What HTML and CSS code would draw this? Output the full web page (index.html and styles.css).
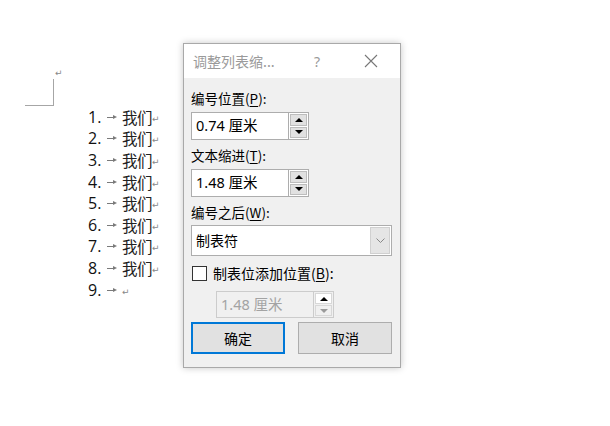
FILE: index.html
```html
<!DOCTYPE html>
<html lang="zh-CN">
<head>
  <meta charset="UTF-8" />
  <title>调整列表缩进</title>
  <link rel="stylesheet" href="styles.css">
</head>
<body>
  <div class="page">
    <div class="corner"><span class="mark">↵</span></div>
    <div class="list">
      <div class="item"><span class="num">1.</span><span class="tab"></span><span class="txt">我们</span><span class="ret">↵</span></div>
      <div class="item"><span class="num">2.</span><span class="tab"></span><span class="txt">我们</span><span class="ret">↵</span></div>
      <div class="item"><span class="num">3.</span><span class="tab"></span><span class="txt">我们</span><span class="ret">↵</span></div>
      <div class="item"><span class="num">4.</span><span class="tab"></span><span class="txt">我们</span><span class="ret">↵</span></div>
      <div class="item"><span class="num">5.</span><span class="tab"></span><span class="txt">我们</span><span class="ret">↵</span></div>
      <div class="item"><span class="num">6.</span><span class="tab"></span><span class="txt">我们</span><span class="ret">↵</span></div>
      <div class="item"><span class="num">7.</span><span class="tab"></span><span class="txt">我们</span><span class="ret">↵</span></div>
      <div class="item"><span class="num">8.</span><span class="tab"></span><span class="txt">我们</span><span class="ret">↵</span></div>
      <div class="item"><span class="num">9.</span><span class="tab"></span><span class="ret">↵</span></div>
    </div>
  </div>

  <div class="dialog">
    <div class="titlebar">
      <span class="title">调整列表缩...</span>
      <span class="help">?</span>
      <svg class="close" width="14" height="14" viewBox="0 0 14 14">
        <path d="M1 1L13 13M13 1L1 13" stroke="#777" stroke-width="1.1" fill="none"/>
      </svg>
    </div>
    <div class="body">
      <div class="label first">编号位置(<u>P</u>):</div>
      <div class="spin">
        <div class="spin-input">0.74 厘米</div>
        <div class="spin-btns">
          <div class="spin-btn"><span class="tri up"></span></div>
          <div class="spin-btn"><span class="tri down"></span></div>
        </div>
      </div>

      <div class="label">文本缩进(<u>T</u>):</div>
      <div class="spin">
        <div class="spin-input">1.48 厘米</div>
        <div class="spin-btns">
          <div class="spin-btn"><span class="tri up"></span></div>
          <div class="spin-btn"><span class="tri down"></span></div>
        </div>
      </div>

      <div class="label">编号之后(<u>W</u>):</div>
      <div class="select">
        <div class="select-value">制表符</div>
        <div class="select-btn">
          <svg width="9" height="6" viewBox="0 0 9 6"><path d="M0.5 0.5L4.5 4.5L8.5 0.5" stroke="#888" fill="none"/></svg>
        </div>
      </div>

      <div class="check-row">
        <span class="checkbox"></span>
        <span class="check-label">制表位添加位置(<u>B</u>):</span>
      </div>
      <div class="spin disabled">
        <div class="spin-input">1.48 厘米</div>
        <div class="spin-btns">
          <div class="spin-btn"><span class="tri up"></span></div>
          <div class="spin-btn"><span class="tri down"></span></div>
        </div>
      </div>

      <div class="buttons">
        <button class="btn default">确定</button>
        <button class="btn">取消</button>
      </div>
    </div>
  </div>
</body>
</html>
```

FILE: styles.css
```css
* {
  box-sizing: border-box;
}
body {
  margin: 0;
  width: 610px;
  height: 426px;
  background: #fff;
  position: relative;
  overflow: hidden;
  font-family: "Noto Sans", "Noto Sans CJK SC", sans-serif;
  color: #000;
}

/* document behind the dialog */
.page {
  padding-top: 79px;
}
.corner {
  position: relative;
  margin-left: 25px;
  width: 29px;
  height: 27px;
  border-right: 1px solid #a6a6a6;
  border-bottom: 1px solid #a6a6a6;
}
.corner .mark {
  position: absolute;
  left: 30px;
  top: -11px;
  font-size: 9px;
  color: #888;
  font-family: "DejaVu Sans", sans-serif;
}
.list {
  margin-left: 88px;
}
.item {
  display: flex;
  align-items: center;
  height: 21.6px;
}
.num {
  width: 16px;
  font-family: "Open Sans", sans-serif;
  font-size: 16px;
  color: #111;
}
/* tab mark: small gray arrow */
.tab {
  position: relative;
  width: 15px;
  height: 6px;
  margin-left: 3px;
  margin-top: 2px;
}
.tab::before {
  content: "";
  position: absolute;
  left: 0;
  top: 2px;
  width: 7px;
  height: 1px;
  background: #7a7a7a;
}
.tab::after {
  content: "";
  position: absolute;
  left: 6px;
  top: 0;
  border-left: 4px solid #7a7a7a;
  border-top: 2.5px solid transparent;
  border-bottom: 2.5px solid transparent;
}
.txt {
  font-family: "Noto Sans CJK SC", sans-serif;
  font-size: 15.5px;
  color: #222;
  letter-spacing: -0.5px;
}
.ret {
  font-size: 9px;
  color: #888;
  font-family: "DejaVu Sans", sans-serif;
  margin-top: 4px;
}

/* dialog window */
.dialog {
  position: absolute;
  left: 183px;
  top: 43px;
  width: 218px;
  height: 325px;
  background: #f0f0f0;
  border: 1px solid #a9a9a9;
  box-shadow: 0 0 7px rgba(0, 0, 0, 0.22);
  font-family: "Noto Sans CJK SC", sans-serif;
  font-size: 13.5px;
}
.titlebar {
  height: 34px;
  background: #fff;
  display: flex;
  align-items: center;
}
.title {
  padding-left: 9px;
  width: 130px;
  color: #9a9a9a;
  font-size: 14px;
}
.help {
  color: #999;
  font-size: 14px;
  font-family: "Noto Sans", sans-serif;
}
.close {
  margin-left: 44px;
}
.body {
  padding: 0 8px 0 7px;
}
.label {
  height: 20px;
  line-height: 20px;
  margin-top: 5px;
}
.label.first {
  margin-top: 10px;
}
.label u,
.check-label u {
  text-decoration-thickness: 1px;
  text-underline-offset: 2px;
}

.spin {
  display: flex;
  width: 118px;
  height: 28px;
  margin-top: 4px;
}
.spin-input {
  width: 97px;
  height: 100%;
  background: #fff;
  border: 1px solid #adadad;
  border-right: none;
  padding-left: 4px;
  line-height: 25px;
  font-family: "Noto Sans", "Noto Sans CJK SC", sans-serif;
  font-size: 14.5px;
}
.spin-btns {
  width: 21px;
  border: 1px solid #adadad;
  background: #fff;
  display: flex;
  flex-direction: column;
  padding: 1px;
  gap: 1px;
}
.spin-btn {
  flex: 1;
  background: #e1e1e1;
  border: 1px solid #bdbdbd;
  display: flex;
  align-items: center;
  justify-content: center;
}
.tri {
  width: 0;
  height: 0;
  border-left: 4px solid transparent;
  border-right: 4px solid transparent;
}
.tri.up {
  border-bottom: 4px solid #000;
}
.tri.down {
  border-top: 4px solid #000;
}
.spin.disabled {
  margin-left: 25px;
  margin-top: 8px;
  height: 27px;
}
.spin.disabled .spin-input {
  background: #f0f0f0;
  color: #a3a3a3;
  border-color: #cccccc;
  line-height: 24px;
}
.spin.disabled .spin-btns {
  border-color: #cccccc;
  background: #f0f0f0;
}
.spin.disabled .spin-btn {
  background: #f0f0f0;
  border-color: #d8d8d8;
}
.spin.disabled .spin-btn:first-child {
  background: #fff;
}
.spin.disabled .tri.down {
  border-top-color: #9a9a9a;
}

.select {
  display: flex;
  width: 201px;
  height: 31px;
  margin-top: 3px;
  background: #fff;
  border: 1px solid #adadad;
}
.select-value {
  flex: 1;
  padding-left: 4px;
  line-height: 28px;
  font-size: 14px;
}
.select-btn {
  width: 20px;
  margin: 1px;
  background: #e5e5e5;
  border: 1px solid #d0d0d0;
  display: flex;
  align-items: center;
  justify-content: center;
}

.check-row {
  display: flex;
  align-items: center;
  height: 20px;
  margin-top: 7px;
  padding-left: 1px;
}
.checkbox {
  width: 15px;
  height: 15px;
  background: #fff;
  border: 1px solid #333;
  margin-right: 6px;
}
.check-label {
  font-size: 14px;
}

.buttons {
  display: flex;
  justify-content: space-between;
  margin-top: 4px;
}
.btn {
  width: 94px;
  height: 32px;
  background: #e1e1e1;
  border: 1px solid #adadad;
  font-family: "Noto Sans CJK SC", sans-serif;
  font-size: 14px;
  color: #000;
  padding: 0;
}
.btn.default {
  border: 2px solid #0078d7;
}
```
